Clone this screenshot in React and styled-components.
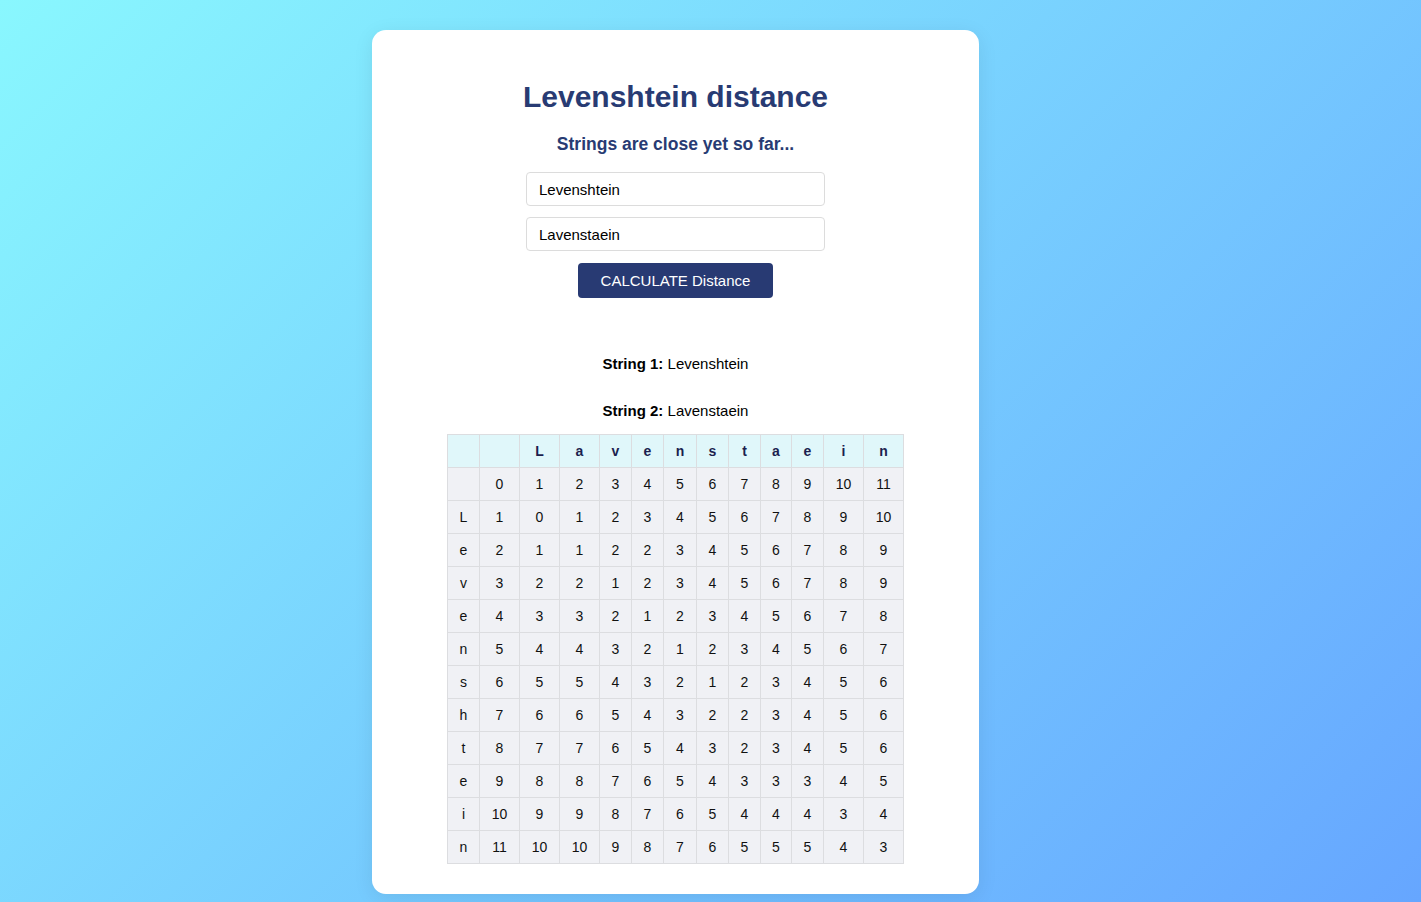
import React, { useState, useMemo } from "react";
import styled, { createGlobalStyle } from "styled-components";

const Global = createGlobalStyle`
  html, body { margin: 0; padding: 0; }
  body {
    font-family: "Liberation Sans", Arial, sans-serif;
    background: linear-gradient(135deg, #89f7fe 0%, #66a6ff 100%);
    min-height: 100vh;
  }
`;

const Page = styled.div`
  display: flex;
  padding: 30px 0 8px 372px;
`;

const Card = styled.div`
  width: 607px;
  box-sizing: border-box;
  background: #ffffff;
  border-radius: 14px;
  box-shadow: 0 4px 20px rgba(0, 0, 0, 0.08);
  padding: 49px 0 30px;
  display: flex;
  flex-direction: column;
  align-items: center;
`;

const Title = styled.h1`
  margin: 0;
  font-size: 30px;
  line-height: 36px;
  font-weight: 700;
  color: #283b73;
`;

const Subtitle = styled.h3`
  margin: 19px 0 0;
  font-size: 17.5px;
  line-height: 20px;
  font-weight: 700;
  color: #283b73;
`;

const Form = styled.div`
  margin-top: 18px;
  display: flex;
  flex-direction: column;
  align-items: center;
`;

const Input = styled.input`
  box-sizing: border-box;
  width: 299px;
  height: 34px;
  padding: 0 12px;
  margin-bottom: ${(p) => p.$gap}px;
  border: 1px solid #dcdcdc;
  border-radius: 4px;
  font-family: "Liberation Sans", Arial, sans-serif;
  font-size: 15px;
  color: #000;
  outline: none;
`;

const Button = styled.button`
  box-sizing: border-box;
  height: 35px;
  padding: 0 23px;
  border: none;
  border-radius: 4px;
  background: #283a73;
  color: #ffffff;
  font-family: "Liberation Sans", Arial, sans-serif;
  font-size: 15px;
  cursor: pointer;
`;

const Result = styled.div`
  margin-top: 57px;
  display: flex;
  flex-direction: column;
  align-items: center;
`;

const Line = styled.p`
  margin: 0 0 ${(p) => p.$gap}px;
  font-size: 15px;
  line-height: 17px;
  color: #000;
`;

const Table = styled.table`
  border-collapse: collapse;
  table-layout: fixed;
  font-size: 14px;
`;

const Col = styled.col`
  width: ${(p) => p.$w}px;
`;

const Th = styled.th`
  background: #e0f7fa;
  border: 1px solid #dcdde0;
  padding: 8px 0;
  line-height: 16px;
  font-weight: 700;
  color: #1c1f4f;
  text-align: center;
`;

const Td = styled.td`
  background: #f0f1f5;
  border: 1px solid #dcdde0;
  padding: 8px 0;
  line-height: 16px;
  color: #111;
  text-align: center;
`;

const COLS = [32, 40, 40, 40, 32, 32, 33, 32, 32, 31, 32, 40, 40];

function matrix(a, b) {
  const m = [];
  for (let i = 0; i <= a.length; i++) {
    m.push([]);
    for (let j = 0; j <= b.length; j++) {
      if (i === 0) m[i][j] = j;
      else if (j === 0) m[i][j] = i;
      else {
        const cost = a[i - 1] === b[j - 1] ? 0 : 1;
        m[i][j] = Math.min(m[i - 1][j] + 1, m[i][j - 1] + 1, m[i - 1][j - 1] + cost);
      }
    }
  }
  return m;
}

export default function App() {
  const [s1, setS1] = useState("Levenshtein");
  const [s2, setS2] = useState("Lavenstaein");
  const a = "Levenshtein";
  const b = "Lavenstaein";
  const m = useMemo(() => matrix(a, b), []);

  return (
    <>
      <Global />
      <Page>
        <Card>
          <Title>Levenshtein distance</Title>
          <Subtitle>Strings are close yet so far...</Subtitle>
          <Form>
            <Input $gap={11} value={s1} onChange={(e) => setS1(e.target.value)} />
            <Input $gap={12} value={s2} onChange={(e) => setS2(e.target.value)} />
            <Button>CALCULATE Distance</Button>
          </Form>
          <Result>
            <Line $gap={30}>
              <b>String 1:</b> {a}
            </Line>
            <Line $gap={15}>
              <b>String 2:</b> {b}
            </Line>
            <Table>
              <colgroup>
                {COLS.map((w, i) => (
                  <Col key={i} $w={w} />
                ))}
              </colgroup>
              <thead>
                <tr>
                  <Th></Th>
                  <Th></Th>
                  {b.split("").map((c, i) => (
                    <Th key={i}>{c}</Th>
                  ))}
                </tr>
              </thead>
              <tbody>
                {m.map((row, i) => (
                  <tr key={i}>
                    <Td>{i === 0 ? "" : a[i - 1]}</Td>
                    {row.map((v, j) => (
                      <Td key={j}>{v}</Td>
                    ))}
                  </tr>
                ))}
              </tbody>
            </Table>
          </Result>
        </Card>
      </Page>
    </>
  );
}
